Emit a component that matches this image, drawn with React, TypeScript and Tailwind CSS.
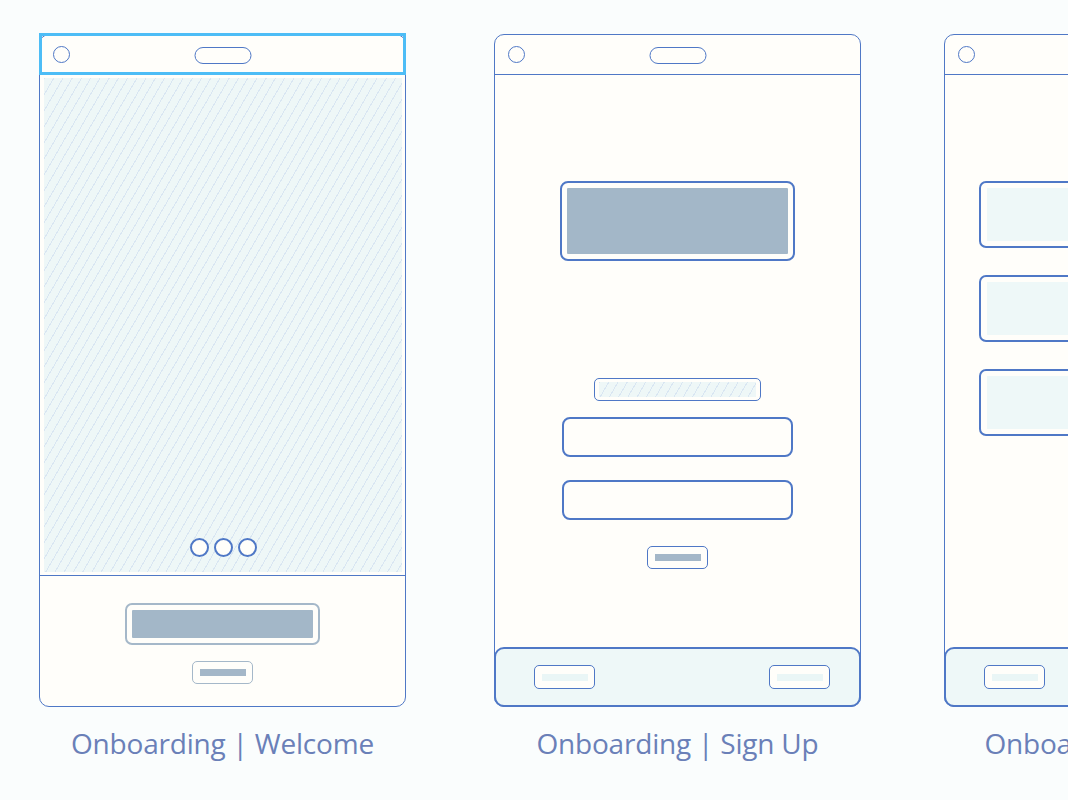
import type { ReactNode } from "react";

const hatch =
  "bg-[repeating-linear-gradient(120deg,#d9e6f2_0px,#d9e6f2_1px,#eef7f7_1px,#eef7f7_8px)]";

function Header({ selected }: { selected?: boolean }) {
  return (
    <div className="relative h-[40px] shrink-0 border-b border-[#4f78c6] flex items-center">
      <div className="ml-[13px] h-[17px] w-[17px] rounded-full border-[1.5px] border-[#4f78c6]" />
      <div className="absolute left-1/2 top-[12px] -translate-x-1/2 h-[17px] w-[57px] rounded-full border-[1.5px] border-[#4f78c6]" />
      {selected && (
        <div className="absolute -left-px -right-px -top-[2px] -bottom-px border-[3px] border-[#4dbdf6]" />
      )}
    </div>
  );
}

function SmallButton({ tone }: { tone: "gray" | "blue" }) {
  return (
    <div
      className={
        tone === "gray"
          ? "h-[23px] w-[61px] rounded-[5px] border-[1.5px] border-[#a5b8c9] bg-[#fffefa] flex items-center justify-center"
          : "h-[23px] w-[61px] rounded-[5px] border-[1.5px] border-[#4f78c6] bg-[#fffefa] flex items-center justify-center"
      }
    >
      <div className="h-[7px] w-[46px] bg-[#a4b7c8]" />
    </div>
  );
}

function TabButton() {
  return (
    <div className="h-[24px] w-[61px] rounded-[5px] border-[1.5px] border-[#4f78c6] bg-[#fffefa] flex items-center justify-center">
      <div className="h-[7px] w-[46px] bg-[#eaf6f6]" />
    </div>
  );
}

function TabBar() {
  return (
    <div className="mt-auto -mx-px -mb-px h-[60px] shrink-0 rounded-[10px] border-2 border-[#4f78c6] bg-[#eef8f8] flex items-center justify-between pl-[38px] pr-[29px]">
      <TabButton />
      <TabButton />
    </div>
  );
}

function Screen({ label, className, children }: { label: string; className?: string; children: ReactNode }) {
  return (
    <div className={`flex flex-col items-center shrink-0 ${className ?? ""}`}>
      <div className="h-[673px] w-[367px] rounded-[10px] border border-[#4f78c6] bg-[#fffefa] flex flex-col">
        {children}
      </div>
      <div className="mt-[19px] whitespace-nowrap text-[28px] leading-[34px] font-normal text-[#6a80b8] font-['Open_Sans',sans-serif] tracking-[-0.2px]">
        {label}
      </div>
    </div>
  );
}

function Welcome() {
  return (
    <Screen label="Onboarding | Welcome">
      <Header selected />
      <div className="h-[501px] shrink-0 border-b border-[#4f78c6] p-[3px] pl-[4px]">
        <div className={`h-full w-full ${hatch} flex items-end justify-center pb-[15px]`}>
          <div className="flex gap-[5px]">
            <div className="h-[19px] w-[19px] rounded-full border-2 border-[#4f78c6] bg-[#fffefa]" />
            <div className="h-[19px] w-[19px] rounded-full border-2 border-[#4f78c6] bg-[#fffefa]" />
            <div className="h-[19px] w-[19px] rounded-full border-2 border-[#4f78c6] bg-[#fffefa]" />
          </div>
        </div>
      </div>
      <div className="flex flex-col items-center pt-[27px]">
        <div className="h-[42px] w-[195px] rounded-[7px] border-2 border-[#a5b8c9] p-[5px]">
          <div className="h-full w-full rounded-[1px] bg-[#a3b7c8]" />
        </div>
        <div className="mt-[16px]">
          <SmallButton tone="gray" />
        </div>
      </div>
    </Screen>
  );
}

function SignUp() {
  return (
    <Screen label="Onboarding | Sign Up" className="ml-[88px]">
      <Header />
      <div className="flex flex-col items-center">
        <div className="mt-[106px] h-[80px] w-[235px] rounded-[8px] border-2 border-[#4f78c6] p-[5px]">
          <div className="h-full w-full rounded-[1px] bg-[#a3b7c8]" />
        </div>
        <div className="mt-[117px] h-[23px] w-[167px] rounded-[5px] border-[1.5px] border-[#4f78c6] px-[4px] py-[3px]">
          <div className={`h-full w-full ${hatch}`} />
        </div>
        <div className="mt-[16px] h-[40px] w-[231px] rounded-[8px] border-2 border-[#4f78c6]" />
        <div className="mt-[23px] h-[40px] w-[231px] rounded-[8px] border-2 border-[#4f78c6]" />
        <div className="mt-[26px]">
          <SmallButton tone="blue" />
        </div>
      </div>
      <TabBar />
    </Screen>
  );
}

function Card() {
  return (
    <div className="h-[67px] w-[297px] rounded-[7px] border-2 border-[#4f78c6] px-[6px] py-[5px]">
      <div className="h-full w-full bg-[#eef8f8]" />
    </div>
  );
}

function Settings() {
  return (
    <Screen label="Onboarding | Settings" className="ml-[83px]">
      <Header />
      <div className="flex flex-col gap-[27px] pl-[34px] pt-[106px]">
        <Card />
        <Card />
        <Card />
      </div>
      <TabBar />
    </Screen>
  );
}

export default function App() {
  return (
    <div className="h-[800px] w-[1068px] overflow-hidden bg-[#fafdfd] pt-[34px] pl-[39px]">
      <div className="flex">
        <Welcome />
        <SignUp />
        <Settings />
      </div>
    </div>
  );
}
